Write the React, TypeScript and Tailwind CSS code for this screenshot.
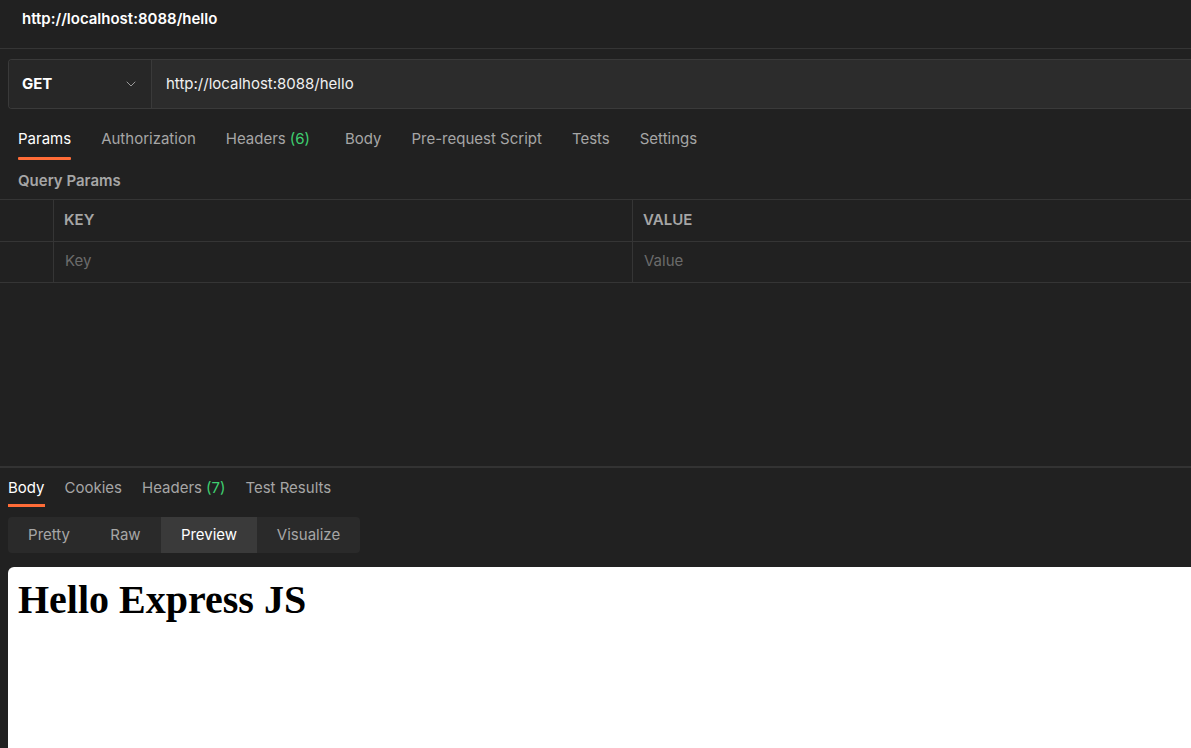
import { ChevronDown } from "lucide-react";

const reqTabs = [
  { label: "Params", active: true },
  { label: "Authorization" },
  { label: "Headers", count: "(6)" },
  { label: "Body" },
  { label: "Pre-request Script" },
  { label: "Tests" },
  { label: "Settings" },
];

const resTabs = [
  { label: "Body", active: true },
  { label: "Cookies" },
  { label: "Headers", count: "(7)" },
  { label: "Test Results" },
];

const modes = ["Pretty", "Raw", "Preview", "Visualize"];

export default function App() {
  return (
    <div
      className="w-[1191px] h-[748px] overflow-hidden bg-[#212121] text-[#e6e6e6] flex flex-col"
      style={{ fontFamily: "Inter, 'Noto Sans', sans-serif" }}
    >
      {/* title bar */}
      <div className="h-[49px] shrink-0 flex items-start pt-[8px] pl-[22px] border-b border-[#353535]">
        <span className="text-[15px] leading-[22px] font-semibold text-white">
          http://localhost:8088/hello
        </span>
      </div>

      {/* url bar */}
      <div className="pl-[8px] pt-[10px] shrink-0">
        <div className="h-[50px] flex border border-[#3a3a3a] border-r-0 rounded-l-[4px] overflow-hidden">
          <div className="w-[143px] shrink-0 flex items-center justify-between pl-[13px] pr-[12px] bg-[#272727] border-r border-[#3a3a3a]">
            <span className="text-[15px] font-bold text-white">GET</span>
            <ChevronDown size={16} strokeWidth={1.5} className="text-[#9a9a9a]" />
          </div>
          <div className="flex-1 flex items-center pl-[14px] bg-[#2c2c2c]">
            <span className="text-[15px] text-[#f0f0f0]">http://localhost:8088/hello</span>
          </div>
        </div>
      </div>

      {/* request tabs */}
      <div className="flex items-start pl-[18px] h-[51px] pt-[19px] gap-[30px] shrink-0">
        {reqTabs.map((t) => (
          <div key={t.label} className="flex flex-col">
            <span
              className={
                "text-[15px] leading-[22px] whitespace-nowrap " +
                (t.active ? "text-white" : "text-[#a6a6a6]")
              }
            >
              {t.label}
              {t.count && <span className="text-[#3fcf70] ml-[4px] mr-[5px]">{t.count}</span>}
            </span>
            {t.active && <div className="h-[3px] bg-[#ff6c37] mt-[7px] rounded-[1px]" />}
          </div>
        ))}
      </div>

      <div className="pl-[18px] h-[39px] pt-[8px] shrink-0">
        <span className="text-[15px] font-semibold text-[#a6a6a6]">Query Params</span>
      </div>

      {/* params table */}
      <div className="border-t border-[#353535] shrink-0">
        <div className="grid grid-cols-[53px_579px_1fr] h-[42px] border-b border-[#353535]">
          <div />
          <div className="border-l border-[#353535] flex items-center pl-[10px]">
            <span className="text-[15px] font-semibold text-[#a6a6a6]">KEY</span>
          </div>
          <div className="border-l border-[#353535] flex items-center pl-[10px]">
            <span className="text-[15px] font-semibold text-[#a6a6a6]">VALUE</span>
          </div>
        </div>
        <div className="grid grid-cols-[53px_579px_1fr] h-[41px] border-b border-[#353535]">
          <div />
          <div className="border-l border-[#353535] flex items-center pl-[11px] pb-[1px]">
            <span className="text-[15px] text-[#6b6b6b]">Key</span>
          </div>
          <div className="border-l border-[#353535] flex items-center pl-[11px] pb-[1px]">
            <span className="text-[15px] text-[#6b6b6b]">Value</span>
          </div>
        </div>
      </div>

      <div className="h-[183px] shrink-0" />

      {/* response */}
      <div className="border-t-2 border-[#333333] pl-[8px] shrink-0">
        <div className="flex gap-[20px] pt-[9px] h-[49px]">
          {resTabs.map((t) => (
            <div key={t.label} className="flex flex-col">
              <span
                className={
                  "text-[15px] leading-[22px] whitespace-nowrap " +
                  (t.active ? "text-white" : "text-[#a6a6a6]")
                }
              >
                {t.label}
                {t.count && <span className="text-[#3fcf70] ml-[4px]">{t.count}</span>}
              </span>
              {t.active && <div className="h-[3px] bg-[#ff6c37] mt-[5px]" />}
            </div>
          ))}
        </div>

        <div className="w-[352px] h-[36px] flex bg-[#2a2a2a] rounded-[4px] overflow-hidden">
          {modes.map((m) => (
            <div
              key={m}
              className={
                "h-full flex items-center justify-center text-[15px] " +
                (m === "Preview"
                  ? "w-[96px] bg-[#3a3a3a] text-white"
                  : m === "Pretty"
                  ? "w-[82px] text-[#a6a6a6]"
                  : m === "Raw"
                  ? "w-[71px] text-[#a6a6a6]"
                  : "w-[103px] text-[#a6a6a6]")
              }
            >
              {m}
            </div>
          ))}
        </div>

        <div className="mt-[14px] h-[200px] bg-white rounded-tl-[6px] pl-[10px] pt-[10px]">
          <h1
            className="text-[40px] font-bold text-black leading-[46px]"
            style={{ fontFamily: "'Liberation Serif', 'Times New Roman', serif" }}
          >
            Hello Express JS
          </h1>
        </div>
      </div>
    </div>
  );
}
